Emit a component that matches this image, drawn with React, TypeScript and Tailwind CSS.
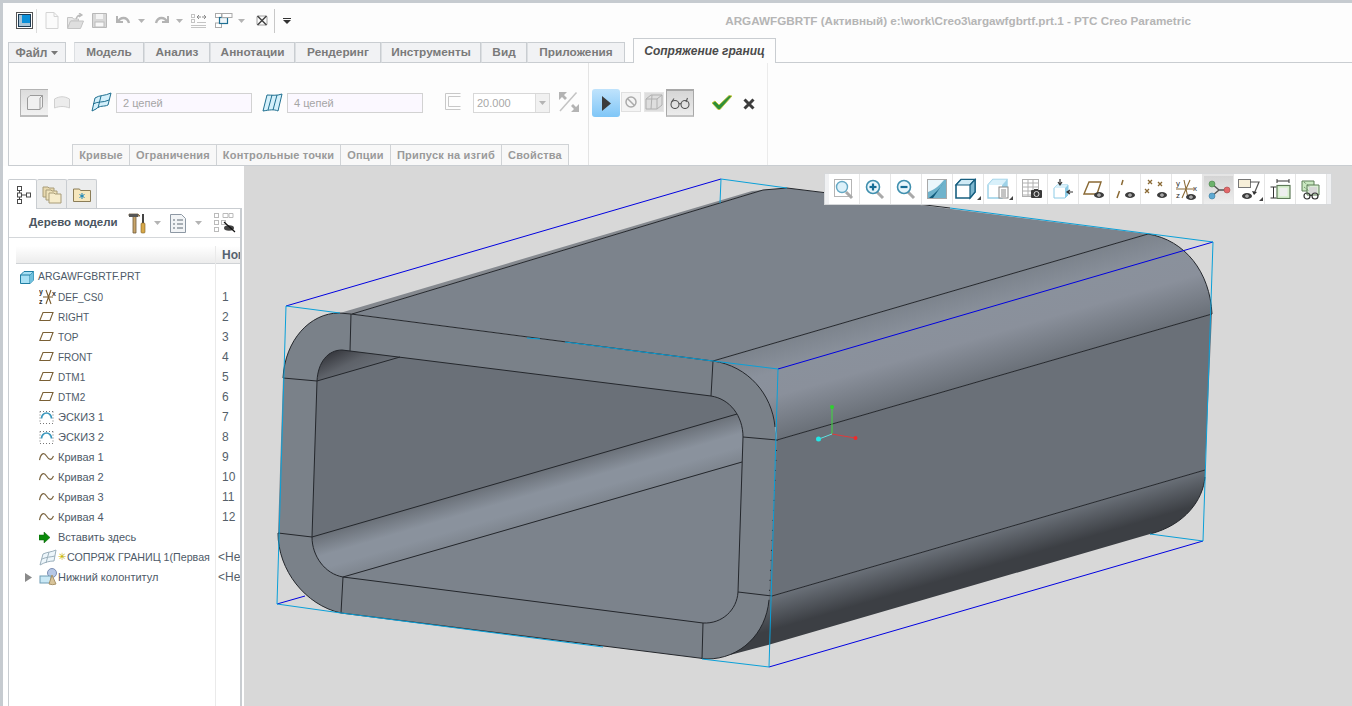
import React from "react";

const font = { fontFamily: '"Liberation Sans", Arial, sans-serif' };

const I = ({ w, h, children, className = "" }: { w: number; h: number; children: React.ReactNode; className?: string }) => (
  <svg width={w} height={h} viewBox={`0 0 ${w} ${h}`} className={"block shrink-0 " + className}>{children}</svg>
);

const Caret = ({ className = "", fill = "#b4b4b4" }: { className?: string; fill?: string }) => (
  <svg width="7" height="4" viewBox="0 0 7 4" className={"block shrink-0 " + className}><path d="M0 0h7L3.500 4z" fill={fill} /></svg>
);

function QuickBar() {
  return (
    <div className="h-[35px] flex items-center pl-[13px] pr-[161px] bg-[#fdfdfd]">
      <I w={17} h={17}>
        <rect x="0.500" y="0.500" width="16" height="16" fill="#fff" stroke="#555" />
        <rect x="2.500" y="2.500" width="12" height="12" fill="#a8c4d6" stroke="#1d3c55" />
        <rect x="6" y="3" width="8" height="8" fill="#0a8fd8" />
      </I>
      <div className="w-px h-[24px] bg-[#dcdcdc] ml-[3px] mr-[8px]" />
      <I w={14} h={17}><path d="M1 .5h8l4 4v12H1z" fill="#fbfbfb" stroke="#d4d4d4" /><path d="M9 .5v4h4" fill="none" stroke="#d4d4d4" /></I>
      <I w={17} h={16} className="ml-[8px]"><path d="M.5 4.500h5l1 1.500h5v2H4l-3.500 7z" fill="#e8e8e8" stroke="#c4c4c4" /><path d="M.5 15.500l3-7.500h13l-3 7.500z" fill="#dedede" stroke="#c4c4c4" /><path d="M9 6c1-3 3-4 5-4M12 0l3 2-3 2" fill="none" stroke="#bbb" strokeWidth="1.300" /></I>
      <I w={15} h={15} className="ml-[8px]"><path d="M.5.500h14v14H.5z" fill="#d8d8d8" stroke="#b8b8b8" /><rect x="4" y="1" width="7" height="5" fill="#f4f4f4" /><rect x="3" y="9" width="9" height="5" fill="#f8f8f8" stroke="#bcbcbc" /></I>
      <I w={15} h={11} className="ml-[9px]"><path d="M1 1v6h6" fill="none" stroke="#b4b4b4" strokeWidth="2" /><path d="M2 7c2-5 9-6 11 1" fill="none" stroke="#b4b4b4" strokeWidth="2.400" /></I>
      <Caret className="ml-[7px]" />
      <I w={15} h={11} className="ml-[9px]"><path d="M14 1v6H8" fill="none" stroke="#b4b4b4" strokeWidth="2" /><path d="M13 7C11 2 4 1 2 8" fill="none" stroke="#b4b4b4" strokeWidth="2.400" /></I>
      <Caret className="ml-[7px]" />
      <I w={15} h={15} className="ml-[8px]">
        <g fill="none" stroke="#c4c4c4"><rect x=".5" y="1.500" width="3" height="3" /><rect x=".5" y="6.500" width="3" height="3" /><path d="M0 12.500h15M0 14.500h15M6 9.500h9" /></g>
        <path d="M6 4h4M8 2l-2 2 2 2M11 4h4M13 2l2 2-2 2" fill="none" stroke="#8b8b8b" />
      </I>
      <I w={18} h={15} className="ml-[9px]">
        <rect x=".5" y=".5" width="6" height="4" fill="#fff" stroke="#aaa" />
        <rect x=".5" y="10" width="6" height="4.500" fill="#fff" stroke="#aaa" />
        <rect x="4.500" y="4.500" width="8" height="6" fill="#eef5f9" stroke="#1e6f93" strokeWidth="1.200" />
        <rect x="7" y=".5" width="10" height="4" fill="#fff" stroke="#aaa" />
      </I>
      <Caret className="ml-[5px]" />
      <I w={12} h={11} className="ml-[11px]">
        <rect x="1" y="1" width="10" height="9" rx="1" fill="none" stroke="#a0a0a0" />
        <path d="M1.500 1l9 9M10.500 1l-9 9" stroke="#444" strokeWidth="1.500" />
      </I>
      <div className="w-px h-[24px] bg-[#c8c8c8] ml-[6px] mr-[8px]" />
      <svg width="8" height="6" viewBox="0 0 8 6" className="block shrink-0"><path d="M0 0h8v1H0zM0 2h8L4 6z" fill="#333" /></svg>
      <div className="ml-auto text-[11.700px] font-bold text-[#b5b5b5] whitespace-nowrap">
        ARGAWFGBRTF (Активный) e:\work\Creo3\argawfgbrtf.prt.1 - PTC Creo Parametric
      </div>
    </div>
  );
}

const mainTabs: [string, number][] = [
  ["Модель", 70],
  ["Анализ", 66],
  ["Аннотации", 85],
  ["Рендеринг", 86],
  ["Инструменты", 100],
  ["Вид", 46],
  ["Приложения", 98],
];

function Tabs() {
  return (
    <div className="h-[25px] flex items-end pl-[5px]">
      <div className="w-[58px] h-[21px] bg-[#f1f2f4] border border-[#c9cdd1] flex items-center justify-center gap-[4px] text-[12px] font-bold text-[#7a7a7a]">
        Файл <Caret fill="#777" />
      </div>
      <div className="w-[8px] h-[21px] border-b border-[#c9cdd1]" />
      {mainTabs.map(([t, w]) => (
        <div key={t} style={{ width: w }} className="h-[21px] bg-[#f1f2f4] border border-[#c9cdd1] border-l-[#dcdfe2] first:border-l-[#c9cdd1] flex items-center justify-center text-[11.800px] font-bold text-[#7a7a7a]">{t}</div>
      ))}
      <div className="w-[8px] h-[21px] border-b border-[#c9cdd1]" />
      <div className="w-[143px] h-[25px] bg-[#fdfdfd] border border-b-0 border-[#c9cdd1] flex items-center justify-center text-[12px] font-bold italic text-[#4b4b4b]">Сопряжение границ</div>
      <div className="flex-1 h-[21px] border-b border-[#c9cdd1]" />
    </div>
  );
}

const subTabs: [string, number][] = [
  ["Кривые", 58],
  ["Ограничения", 88],
  ["Контрольные точки", 125],
  ["Опции", 51],
  ["Припуск на изгиб", 112],
  ["Свойства", 68],
];

function SurfH() {
  return (
    <I w={21} h={20}>
      <path d="M4 6C8 3 14 4 20 1l-3 12c-4 2-8 0-12 4l-4 2z" fill="#d4f0fb" stroke="#1f6f90" strokeWidth="1" />
      <path d="M2 12c5-3 10-1 16-4M10 4L7 16" fill="none" stroke="#1f6f90" strokeWidth="1" />
    </I>
  );
}
function SurfV() {
  return (
    <I w={21} h={20}>
      <path d="M5 3c4 0 10 1 15-1l-4 17c-4-2-9-1-15 0z" fill="#d4f0fb" stroke="#1f6f90" />
      <path d="M10 3L6 18M15 3l-4 15" fill="none" stroke="#1f6f90" />
    </I>
  );
}

function Ribbon() {
  return (
    <div className="h-[103px] ml-[5px] flex border-b border-l border-[#c9cdd1] bg-[#fdfdfd]">
      <div className="w-[580px] flex flex-col border-r border-[#e4e4e4]">
        <div className="flex-1 flex items-start pt-[26px] pl-[11px]">
          <div className="w-[28px] h-[28px] bg-gradient-to-b from-[#dcdcdc] to-[#f1f1f1] border-t border-l border-[#b4b4b4] border-b-2 border-b-[#bdbdbd] flex items-center justify-center">
            <I w={16} h={15}><path d="M.5 3L3 .5h12.500v11.500L13 14.500H.5z" fill="#f0f0f0" stroke="#9b9b9b" /><path d="M13 3v11.500M13 3l2.500-2.500" fill="none" stroke="#9b9b9b" /></I>
          </div>
          <div className="mt-[7px] ml-[6px]">
            <I w={16} h={14}><path d="M.5 3c5-3 10-3 15 0v9c-5-2-10-2-15 0z" fill="#ececec" stroke="#d0d0d0" /></I>
          </div>
          <div className="mt-[3px] ml-[21px]"><SurfH /></div>
          <div className="ml-[4px] mt-[4px] w-[136px] h-[20px] bg-[#fbf8ff] border border-[#d2d2d2] pl-[6px] flex items-center text-[11px] text-[#a5a5a5]">2 цепей</div>
          <div className="mt-[3px] ml-[10px]"><SurfV /></div>
          <div className="ml-[4px] mt-[4px] w-[136px] h-[20px] bg-[#fbf8ff] border border-[#d2d2d2] pl-[6px] flex items-center text-[11px] text-[#a5a5a5]">4 цепей</div>
          <div className="mt-[4px] ml-[22px]">
            <I w={16} h={17}><path d="M.5.5h15M.5 16.500h15M.5.500v16M3.500 3.500h12M3.500 13.500h12M3.500 3.500v10" fill="none" stroke="#c8c8c8" /></I>
          </div>
          <div className="ml-[12px] mt-[4px] w-[77px] h-[20px] bg-white border border-[#d8d8d8] flex items-center text-[11px] text-[#a8a8a8] pl-[3px]">
            20.000
            <div className="ml-auto w-[14px] h-full border-l border-[#dcdcdc] bg-[#f1f1f1] flex items-center justify-center"><Caret /></div>
          </div>
          <div className="ml-[8px] mt-[2px]">
            <I w={22} h={22}>
              <path d="M18.500 1.500L2 20" stroke="#c4c4c4" strokeWidth="1.500" />
              <path d="M1 1h8L6 4l3 3-2 2-3-3-3 3zM21 21h-8l3-3-3-3 2-2 3 3 3-3z" fill="#b4b4b4" />
            </I>
          </div>
        </div>
        <div className="h-[21px] flex pl-[63px]">
          {subTabs.map(([t, w]) => (
            <div key={t} style={{ width: w }} className="h-[21px] bg-[#f8f8f8] border border-b-0 border-[#d0d3d6] -mr-px flex items-center justify-center text-[11px] font-bold text-[#9a9a9a] tracking-[0.2px] whitespace-nowrap">{t}</div>
          ))}
        </div>
      </div>
      <div className="w-[179px] flex items-start pt-[26px] pl-[3px] border-r border-[#ebebeb]">
        <div className="w-[28px] h-[28px] rounded-[3px] bg-gradient-to-b from-[#bfe3fc] to-[#7fc6f7] flex items-center justify-center">
          <I w={9} h={15}><path d="M0 0l9 7.500L0 15z" fill="#3c3c3c" /></I>
        </div>
        <div className="ml-[1px] mt-[3px] w-[20px] h-[20px] bg-[#f4f4f4] border border-[#e0e0e0] flex items-center justify-center">
          <I w={12} h={12}><circle cx="6" cy="6" r="5" fill="none" stroke="#aaa" strokeWidth="1.500" /><path d="M2.500 2.500l7 7" stroke="#aaa" strokeWidth="1.500" /></I>
        </div>
        <div className="ml-[3px] mt-[3px] w-[20px] h-[20px] bg-[#dedede] border border-[#e6e6e6] flex items-center justify-center">
          <I w={18} h={16}><path d="M1 5l5-4h11v10l-5 4H1zM1 5h11v10M12 5l5-4M7 1L6 15" fill="none" stroke="#b0b0b0" /></I>
        </div>
        <div className="ml-[2px] w-[28px] h-[28px] bg-gradient-to-b from-[#d6d6d6] to-[#ececec] border-t-2 border-l border-r border-[#a8a8a8] border-b-2 border-b-[#c4c4c4] flex items-center justify-center">
          <I w={20} h={12}>
            <g fill="none" stroke="#555" strokeWidth="1.100"><circle cx="5" cy="7.500" r="4" /><circle cx="15" cy="7.500" r="4" /><path d="M9 7c1-1 1-1 2 0M1.500 5L4 1.500M16 5l1.500-4" /></g>
          </I>
        </div>
        <div className="ml-[18px] mt-[6px]">
          <I w={20} h={15}><path d="M0 8l3-2 4 4L17 .5l3 .5L8 14.500h-2z" fill="#2f8f3a" stroke="#c9c32c" strokeWidth=".8" /></I>
        </div>
        <div className="ml-[11px] mt-[9px]">
          <I w={12} h={12}><path d="M1.500 1.500l9 9M10.500 1.500l-9 9" stroke="#3c3c3c" strokeWidth="3" /></I>
        </div>
      </div>
    </div>
  );
}

/* tree icons */
const PlaneIcon = () => <I w={15} h={12}><path d="M4 1.500h10l-3 8H.8z" fill="none" stroke="#7a6035" strokeWidth="1.100" /></I>;
const CsysIcon = () => (
  <svg width="18" height="18" viewBox="0 0 18 18" className="block">
    <path d="M4 9h10M7 2l5 14M12 2L7 16" stroke="#7a5c2c" strokeWidth="1.100" fill="none" />
    <text x="0" y="6" fontSize="7" fontWeight="700" fill="#333" fontFamily="Liberation Sans">y</text>
    <text x="0" y="16" fontSize="7" fontWeight="700" fill="#333" fontFamily="Liberation Sans">z</text>
    <text x="13" y="8" fontSize="7" fontWeight="700" fill="#333" fontFamily="Liberation Sans">x</text>
  </svg>
);
const SketchIcon = () => (
  <I w={15} h={14}>
    <path d="M1 1.500h13M1 13.500h13M1 1.500v12M14 1.500v12" stroke="#777" strokeDasharray="1 2" fill="none" />
    <path d="M2.500 8.500a5 5.500 0 0 1 10 0" fill="none" stroke="#3b97bd" strokeWidth="1.700" />
  </I>
);
const CurveIcon = () => <I w={15} h={10}><path d="M.5 8C2 1 5 0 7.500 4s5 5 7 0" fill="none" stroke="#7c6642" strokeWidth="1.200" /></I>;
const ArrowIcon = () => <I w={11} h={11}><path d="M0 3h5V0l6 5.500L5 11V8H0z" fill="#0a8a0a" stroke="#0b5d0b" strokeWidth=".5" /></I>;
const BlendIcon = () => (
  <I w={18} h={17}>
    <path d="M4 5c4-2 9-2 13-4l-2 11c-4 0-9 1-14 4z" fill="#edf6fb" stroke="#9cb0bc" />
    <path d="M10 3L7 14M3 10c4-2 9-2 13-3" fill="none" stroke="#9cb0bc" />
  </I>
);
const PartIcon = () => (
  <I w={14} h={13}>
    <path d="M.5 4L4 .5h9.500V9L10 12.500H.5z" fill="#a8e0f4" stroke="#1f7ea3" />
    <path d="M.5 4H10v8.500M10 4l3.500-3.500" fill="none" stroke="#1f7ea3" />
    <path d="M10 4l3.500-3.500V9L10 12.500z" fill="#6fc0de" />
  </I>
);
const FooterIcon = () => (
  <I w={20} h={18}>
    <circle cx="13" cy="5" r="4.500" fill="#b7c8e6" stroke="#7d8fb4" />
    <rect x="1" y="8" width="11" height="7" fill="#c9e8f5" stroke="#6f9cb4" />
    <path d="M10 16l3-9 4 9a5 2 0 0 1-7 0z" fill="#d8c49a" stroke="#a8936a" />
  </I>
);

type Row = { icon?: React.ReactNode; label: string; num?: string; size: string };
const LAT = "text-[10px]";
const CYR = "text-[11px]";
const rows: Row[] = [
  { icon: <PartIcon />, label: "ARGAWFGBRTF.PRT", size: "text-[10.400px]" },
  { icon: <CsysIcon />, label: "DEF_CS0", num: "1", size: LAT },
  { icon: <PlaneIcon />, label: "RIGHT", num: "2", size: LAT },
  { icon: <PlaneIcon />, label: "TOP", num: "3", size: LAT },
  { icon: <PlaneIcon />, label: "FRONT", num: "4", size: LAT },
  { icon: <PlaneIcon />, label: "DTM1", num: "5", size: LAT },
  { icon: <PlaneIcon />, label: "DTM2", num: "6", size: LAT },
  { icon: <SketchIcon />, label: "ЭСКИЗ 1", num: "7", size: CYR },
  { icon: <SketchIcon />, label: "ЭСКИЗ 2", num: "8", size: CYR },
  { icon: <CurveIcon />, label: "Кривая 1", num: "9", size: CYR },
  { icon: <CurveIcon />, label: "Кривая 2", num: "10", size: CYR },
  { icon: <CurveIcon />, label: "Кривая 3", num: "11", size: CYR },
  { icon: <CurveIcon />, label: "Кривая 4", num: "12", size: CYR },
  { icon: <ArrowIcon />, label: "Вставить здесь", size: CYR },
  { icon: <BlendIcon />, label: "СОПРЯЖ ГРАНИЦ 1(Первая", num: "<Не", size: "text-[10.700px]" },
  { icon: <FooterIcon />, label: "Нижний колонтитул", num: "<Не", size: CYR },
];

function TreeRow({ r, i }: { r: Row; i: number }) {
  const isRoot = i === 0;
  const isBlend = r.label.startsWith("СОПРЯЖ");
  const isFooter = r.label.startsWith("Нижний");
  return (
    <div className="h-[20px] flex items-center">
      <div className="w-[207px] h-full flex items-center relative overflow-hidden">
        {isFooter && (
          <svg width="7" height="9" viewBox="0 0 7 9" className="absolute left-[16px] top-[6px]"><path d="M0 0l7 4.500L0 9z" fill="#8a8a8a" /></svg>
        )}
        <div className={(isRoot ? "w-[29px] pl-[11px]" : "w-[49px] pl-[30px]") + " shrink-0 flex items-center justify-start h-full"}>{r.icon}</div>
        {isBlend && <span className="text-[#c8b400] text-[10px] leading-none mr-[1px] w-[8px]">✳</span>}
        <span className={r.size + " text-[#4e5a68] whitespace-nowrap"}>{r.label}</span>
      </div>
      <div className={"flex-1 text-[12px] text-[#555f6a] whitespace-nowrap overflow-hidden " + (r.num && r.num.length > 2 ? "pl-[2px]" : "pl-[6px]")}>{r.num}</div>
    </div>
  );
}

function LeftPanel() {
  return (
    <div className="w-[241px] shrink-0 h-full flex flex-col bg-white">
      <div className="h-[13px] shrink-0" />
      <div className="h-[29px] shrink-0 flex pl-[5px]">
        <div className="w-[29px] h-[30px] bg-white border border-b-0 border-[#c9cdd1] rounded-t-[2px] relative z-10 pl-[2px] flex items-center justify-center">
          <I w={14} h={18}>
            <g fill="none" stroke="#4a4a4a"><rect x=".5" y=".5" width="4" height="4" /><rect x=".5" y="7" width="4" height="4" /><rect x=".5" y="13.500" width="4" height="4" /><rect x="9.500" y="7" width="4" height="4" /><path d="M2.500 4.500V7M2.500 11v2.500M4.500 9h5" /></g>
          </I>
        </div>
        <div className="w-[30px] h-[29px] bg-[#eceded] border border-l-0 border-b-0 border-[#c9cdd1] rounded-t-[2px] flex items-center justify-center">
          <I w={20} h={20}>
            <path d="M1 3h5l1 1h5v9H1z" fill="#e8d9ae" stroke="#a89c78" />
            <path d="M4 6h5l1 1h5v9H4z" fill="#efe3bc" stroke="#a89c78" />
            <path d="M7 9h5l1 1h6v9H7z" fill="#f6eccb" stroke="#a89c78" />
          </I>
        </div>
        <div className="w-[30px] h-[29px] bg-[#eceded] border border-l-0 border-b-0 border-[#c9cdd1] rounded-t-[2px] flex items-center justify-center">
          <I w={18} h={16}>
            <path d="M.5 3h6l1 1.500h10v11H.5z" fill="#f6e7bd" stroke="#8b7d57" />
            <path d="M9 7v6M6.500 8.500l5 3M11.500 8.500l-5 3" stroke="#1583b8" strokeWidth="1" />
          </I>
        </div>
      </div>
      <div className="flex-1 min-h-0 ml-[5px] w-[234px] border-l border-t border-r-2 border-[#c9cdd1] flex flex-col overflow-hidden relative">
        <div className="h-[29px] shrink-0 flex items-center border-b border-[#d4d7da] pl-[20px]">
          <span className="text-[11.500px] font-bold text-[#4a5560] whitespace-nowrap w-[99px]">Дерево модели</span>
          <I w={18} h={21}>
            <path d="M1 1h9l2 2H8v17H5V3H1z" fill="#c9a56a" stroke="#6e5a3a" strokeWidth=".8" />
            <path d="M1 1h9v3H1z" fill="#555" />
            <path d="M15 1v9" stroke="#444" strokeWidth="2" />
            <rect x="13" y="10" width="4" height="10" rx="1" fill="#d8a94a" stroke="#7c5e22" strokeWidth=".6" />
          </I>
          <Caret className="ml-[8px]" />
          <I w={16} h={19} className="ml-[9px]">
            <path d="M.5.500h11l4 4v14H.5z" fill="#f2f4f6" stroke="#8d98a4" />
            <path d="M3 6h2M7 6h6M3 10h2M7 10h6M3 14h2M7 14h6" stroke="#5f6a75" />
          </I>
          <Caret className="ml-[9px]" />
          <I w={23} h={20} className="ml-[12px]">
            <g fill="none" stroke="#bbb"><rect x=".5" y=".5" width="4" height="4" /><rect x=".5" y="7.500" width="4" height="4" /><rect x=".5" y="14.500" width="4" height="4" /><rect x="7.500" y="7.500" width="4" height="4" /><path d="M9 .5h5v4H9zM15 .5h4v4h-4z" /></g>
            <ellipse cx="15" cy="15" rx="5" ry="2.800" fill="#444" />
            <path d="M10 9l11 10" stroke="#111" strokeWidth="1.200" />
          </I>
        </div>
        <div className="h-[8px] shrink-0" />
        <div className="h-[18px] ml-[7px] shrink-0 flex bg-gradient-to-b from-white to-[#ececec] border-b border-[#d0d3d6]">
          <div className="w-[200px] shrink-0 border-r border-[#dfe1e3]" />
          <div className="flex-1 pl-[6px] text-[12px] font-bold text-[#556270] leading-[18px] whitespace-nowrap overflow-hidden">Ном</div>
        </div>
        <div className="h-[3px] shrink-0" />
        <div className="flex-1">
          {rows.map((r, i) => <TreeRow key={r.label} r={r} i={i} />)}
        </div>
        <div className="absolute left-[206px] top-[37px] bottom-0 w-px bg-[#eaeaea]" />
      </div>
    </div>
  );
}

/* view toolbar */
const Mag = ({ sign }: { sign?: "+" | "-" }) => (
  <I w={20} h={21}>
    <path d="M12 13l6 6" stroke="#a9a9a9" strokeWidth="3" />
    <circle cx="8" cy="8" r="6.500" fill="#e8f6fc" stroke="#3f8fae" strokeWidth="1.600" />
    {sign && <path d="M4.500 8h7" stroke="#166d96" strokeWidth="2.200" />}
    {sign === "+" && <path d="M8 4.500v7" stroke="#166d96" strokeWidth="2.200" />}
  </I>
);
const Eye = ({ x, y }: { x: number; y: number }) => (
  <g transform={`translate(${x} ${y})`}>
    <ellipse cx="5" cy="3" rx="5" ry="3" fill="#3c3c3c" />
    <circle cx="5" cy="3" r="1.600" fill="#fff" />
    <circle cx="5" cy="3" r=".8" fill="#3c3c3c" />
  </g>
);
const Corner = () => <path d="M27 22h-4l4-4z" fill="#444" />;

const tools: React.ReactNode[] = [
  <I w={20} h={21} key="1">
    <rect x=".5" y=".5" width="17" height="17" fill="#fff" stroke="#b5b5b5" />
    <path d="M12 13l6 6" stroke="#a9a9a9" strokeWidth="3" />
    <circle cx="8" cy="8" r="5.500" fill="#dcf1fa" stroke="#64a8c4" strokeWidth="1.400" />
  </I>,
  <Mag sign="+" key="2" />,
  <Mag sign="-" key="3" />,
  <I w={20} h={20} key="4">
    <rect width="20" height="20" fill="#a9a9a9" />
    <rect x="1" y="1" width="18" height="18" fill="#6fb3cc" />
    <path d="M1 1h16C13 6 7 11 1 13z" fill="#eaf6fb" />
    <path d="M17 3L6 19H2C9 14 14 8 17 3z" fill="#0f5a7c" />
  </I>,
  <I w={28} h={22} key="5">
    <path d="M2 7l5-5.500h14V14l-5 6H2z" fill="#fff" stroke="#175f80" strokeWidth="1.600" />
    <path d="M7 1.500h14L16 7H2z" fill="#cfeaf5" stroke="#175f80" strokeWidth="1.200" />
    <path d="M21 1.500V14l-5 6V7z" fill="#7eb7cf" stroke="#175f80" strokeWidth="1.200" />
    <Corner />
  </I>,
  <I w={28} h={22} key="6">
    <path d="M2 7l5-5.500h14V14l-5 6H2z" fill="#fff" stroke="#98cfe6" strokeWidth="1.400" />
    <path d="M7 1.500h14L16 7H2z" fill="#d8f0fa" />
    <path d="M21 1.500V12l-5 6V7z" fill="#9ed2e8" />
    <rect x="13" y="9" width="9" height="11" fill="#fff" stroke="#888" />
    <path d="M15 12h5M15 14h5M15 16h5M15 18h5" stroke="#888" />
    <Corner />
  </I>,
  <I w={21} h={20} key="7">
    <g fill="none" stroke="#b0b0b0"><rect x=".5" y=".5" width="16" height="17" /><path d="M.5 4h16M.5 8h16M.5 12h16M.5 16h10M6 .5v17M11 .5v12" /></g>
    <rect x="9" y="11" width="11" height="8" rx="1" fill="#3a3a3a" />
    <rect x="12" y="10" width="4" height="2" fill="#3a3a3a" />
    <circle cx="14.500" cy="15" r="2.500" fill="#3a3a3a" stroke="#ddd" />
  </I>,
  <I w={21} h={20} key="8">
    <path d="M1 9l3-3h11v10l-3 3H1z" fill="#fff" stroke="#8ccbe6" />
    <path d="M1 9l3-3h11l-3 3z" fill="#d8f0fa" />
    <path d="M15 6v10l-3 3V9z" fill="#8ccbe6" />
    <path d="M7 0v5M5 3l2 3 2-3M20 13h-6M17 11l-3 2 3 2" fill="none" stroke="#333" strokeWidth="1.200" />
  </I>,
  <I w={22} h={20} key="9">
    <path d="M6 3h12l-4 12H1z" fill="none" stroke="#8a6a35" strokeWidth="1.400" />
    <Eye x={11} y={13} />
  </I>,
  <I w={22} h={20} key="10">
    <path d="M9 1L7.500 6M5.500 12L3 19" stroke="#8a6a35" strokeWidth="1.500" />
    <Eye x={11} y={13} />
  </I>,
  <I w={24} h={20} key="11">
    <path d="M4 1l4 4M8 1L4 5M14 3l4 4M18 3l-4 4M1 10l4 4M5 10l-4 4" stroke="#8a6a35" strokeWidth="1.300" />
    <Eye x={13} y={13} />
  </I>,
  <svg width="24" height="21" viewBox="0 0 24 21" className="block" key="12">
    <path d="M1 10h18M9 1l4 18M15 1L7 19" stroke="#8a6a35" strokeWidth="1.100" fill="none" />
    <text x="1" y="7" fontSize="8" fill="#333" fontFamily="Liberation Sans">y</text>
    <text x="1" y="19" fontSize="8" fill="#333" fontFamily="Liberation Sans">z</text>
    <text x="18" y="12" fontSize="8" fill="#333" fontFamily="Liberation Sans">x</text>
    <Eye x={11} y={15} />
  </svg>,
  <I w={24} h={20} key="13">
    <path d="M5 4l7 6-7 6M12 10h7" fill="none" stroke="#555" strokeWidth="1.400" />
    <circle cx="5" cy="4" r="3" fill="#6cb26c" stroke="#4c824c" strokeWidth=".6" />
    <circle cx="20" cy="10" r="3" fill="#e2686a" stroke="#a84a4a" strokeWidth=".6" />
    <circle cx="5" cy="16" r="3" fill="#5da9d2" stroke="#3c7da0" strokeWidth=".6" />
  </I>,
  <I w={28} h={23} key="14">
    <rect x="3.500" y="1.500" width="12" height="8" fill="#f7efd9" stroke="#777" />
    <path d="M15 4h9l-5 12" fill="none" stroke="#555" strokeWidth="1.200" />
    <path d="M17 13l2 4 3-3z" fill="#333" />
    <Eye x={7} y={15} />
    <path d="M28 23h-4l4-4z" fill="#444" />
  </I>,
  <I w={21} h={20} key="15">
    <path d="M.5 8h6M3.500 8v11M.5 19h6M7 2h12M7 0v4M19 0v4" fill="none" stroke="#333" />
    <rect x="7" y="6.500" width="13" height="13" fill="#d9f0d0" stroke="#5e7a58" strokeWidth="1.200" />
    <rect x="9.500" y="9" width="8" height="8" fill="#eeeeee" />
  </I>,
  <I w={20} h={21} key="16">
    <path d="M1 2h12v10H1z" fill="#c9e8c0" stroke="#5c7d57" />
    <path d="M6 6h12v10H6z" fill="#dbeed5" stroke="#5c7d57" />
    <path d="M3 3l9 8M3 8l5 4" stroke="#5c7d57" strokeDasharray="1 1" />
    <rect x="8" y="8" width="8" height="7" fill="#d8d8d8" />
    <g fill="none" stroke="#333" strokeWidth="1.200"><circle cx="6" cy="17" r="3" /><circle cx="14" cy="17" r="3" /><path d="M9 16.500h2" /></g>
  </I>,
];

function ViewToolbar() {
  return (
    <div className="absolute left-[580px] top-[7px] h-[32px] w-[508px] bg-[#f0f1f3] border border-[#d6d8da] flex pl-[4px]">
      {tools.map((t, i) => (
        <div key={i} className={(i === 5 ? "w-[33px] " : "w-[31px] ") + "h-full border-r border-[#e5e5e5] flex items-center justify-center " + (i === 12 ? "bg-gradient-to-b from-[#d4d4d4] to-[#eeeeee] border-t-2 border-x border-[#a8a8a8]" : "bg-white")}>
          {t}
        </div>
      ))}
    </div>
  );
}

/* 3-D model */
function Model() {
  const top = "M352 314 L763 190 L787 188 L1148 234 L713 361 Z";
  const outer = "M283 378 C285 340 310 313 339 313 L351 314 L713 361 C748 366 772 394 775 427 L777 440 L769 600 C766 634 740 659 707 659 L341 613 C305 605 278 570 278 533 Z";
  const hole = "M317 381 C318 362 328 350 342 350 L711 396 C730 399 743 416 743 437 L738 592 C737 610 722 624 703 623 L343 577 C325 574 312 556 312 537 Z";
  return (
    <svg width="1108" height="540" viewBox="244 166 1108 540" className="absolute inset-0 block">
      <defs>
        <linearGradient id="fTop" gradientUnits="userSpaceOnUse" x1="920" y1="300.600" x2="946" y2="391">
          <stop offset="0" stopColor="#7c838c" />
          <stop offset=".3" stopColor="#8a919c" />
          <stop offset=".55" stopColor="#8a909b" />
          <stop offset="1" stopColor="#6a7078" />
        </linearGradient>
        <linearGradient id="fBot" gradientUnits="userSpaceOnUse" x1="955" y1="542.700" x2="968" y2="587">
          <stop offset="0" stopColor="#6a7078" />
          <stop offset=".7" stopColor="#3c3f44" />
          <stop offset="1" stopColor="#3c3f44" />
        </linearGradient>
        <linearGradient id="fIn" gradientUnits="userSpaceOnUse" x1="520" y1="477" x2="534" y2="525">
          <stop offset="0" stopColor="#6b7179" />
          <stop offset=".4" stopColor="#8a929d" />
          <stop offset=".65" stopColor="#8a929d" />
          <stop offset="1" stopColor="#7c838c" />
        </linearGradient>
        <linearGradient id="fRoof" gradientUnits="userSpaceOnUse" x1="335" y1="352" x2="350" y2="382">
          <stop offset="0" stopColor="#3a3c42" />
          <stop offset=".5" stopColor="#5e6269" />
          <stop offset="1" stopColor="#6a7078" />
        </linearGradient>
        <clipPath id="cHole"><path d={hole} /></clipPath>
      </defs>

      {/* far side of the body */}
      <path d="M760 440 L777 440 L1212 314 L1205 470 L772 596 L760 600 Z" fill="#6a7078" />
      <path d="M755 600 L772 596 L1205 470 L1205 477 C1203 500 1185 525 1150 534 L768 645 L730 655 Z" fill="url(#fBot)" />
      <path d="M713 361 L1148 234 C1185 240 1210 272 1212 314 L777 440 C775 400 750 366 713 361 Z" fill="url(#fTop)" />
      <path d={top} fill="#7c838c" />
      <path d="M340 313 L752 191 L763 190 L352 314 Z" fill="#85898f" />

      {/* front ring and bore */}
      <path d={outer} fill="#7a8189" />
      <g clipPath="url(#cHole)">
        <rect x="300" y="340" width="460" height="300" fill="#6a7078" />
        <path d="M317 381 L400 357 L342 345 L310 350 Z" fill="url(#fRoof)" />
        <path d="M305 540 L750 411 L750 460 L343 577 L320 590 Z" fill="url(#fIn)" />
        <path d="M343 577 L750 460 L750 640 L330 640 Z" fill="#7c838c" />
      </g>

      {/* black edges */}
      <g fill="none" stroke="#24272c" strokeWidth="1">
        <path d="M283 378 C285 340 310 313 339 313 L351 314 L713 361 C748 366 772 394 775 427" />
        <path d="M769 600 C766 634 740 659 707 659 L341 613 C305 605 278 570 278 533" />
        <path d="M777 440 L769 600" strokeDasharray="1 9" />
        <path d={hole} />
        <path d="M352 314 L763 190 L787 188 L950 208" />
        <path d="M713 361 L1148 234 C1185 240 1210 272 1212 314" />
        <path d="M351 314 L350 351" />
        <path d="M713 361 L711 396" />
        <path d="M283 378 L317 381" />
        <path d="M317 381 L400 357" />
        <path d="M743 437 L777 440 L1212 314" />
        <path d="M312 537 L278 533" />
        <path d="M312 537 L737 414" />
        <path d="M343 577 L742 462" />
        <path d="M343 577 L341 613" />
        <path d="M738 592 L772 596 L1205 470" />
        <path d="M703 623 L702 659" />
        <path d="M1205 477 C1203 500 1185 525 1150 534" />
      </g>

      {/* bounding box */}
      <g fill="none" stroke="#0000e0" strokeWidth="1">
        <path d="M286 306 L721 179" />
        <path d="M778 369 L1213 242" />
        <path d="M769 667 L1203 541" />
        <path d="M277 604 L305 596" />
      </g>
      <g fill="none" stroke="#0aa0d8" strokeWidth="1">
        <path d="M286 306 L340 313" />
        <path d="M286 306 L277 604 L341 613" />
        <path d="M702 659 L769 667 L778 369 L713 361" />
        <path d="M721 179 L720 203" />
        <path d="M721 179 L787 188" />
        <path d="M950 208 L1213 242 L1203 541 L1150 534" />
        <path d="M527 338 L540 339 M565 342 L713 361" />
        <path d="M341 613 L603 647" />
      </g>

      {/* csys */}
      <path d="M832 434 V408" stroke="#3fdc3f" strokeWidth="1" />
      <path d="M832 434 L819 439" stroke="#5fe0e0" strokeWidth="1" />
      <path d="M832 434 L855 438" stroke="#e23a3a" strokeWidth="1" />
      <circle cx="832" cy="407" r="2" fill="#2fd02f" />
      <circle cx="818.500" cy="439" r="2.500" fill="#22e6e6" />
      <circle cx="855.500" cy="438" r="2" fill="#f02a2a" />
    </svg>
  );
}

export default function App() {
  return (
    <div style={font} className="w-[1352px] h-[706px] overflow-hidden flex flex-col bg-[#fdfdfd] border-t-[3px] border-l-[3px] border-[#c6cbd0]">
      <div className="shrink-0">
        <QuickBar />
        <Tabs />
        <Ribbon />
      </div>
      <div className="flex-1 flex min-h-0">
        <LeftPanel />
        <div className="flex-1 relative bg-[#d8d8d8] overflow-hidden">
          <Model />
          <ViewToolbar />
        </div>
      </div>
    </div>
  );
}
